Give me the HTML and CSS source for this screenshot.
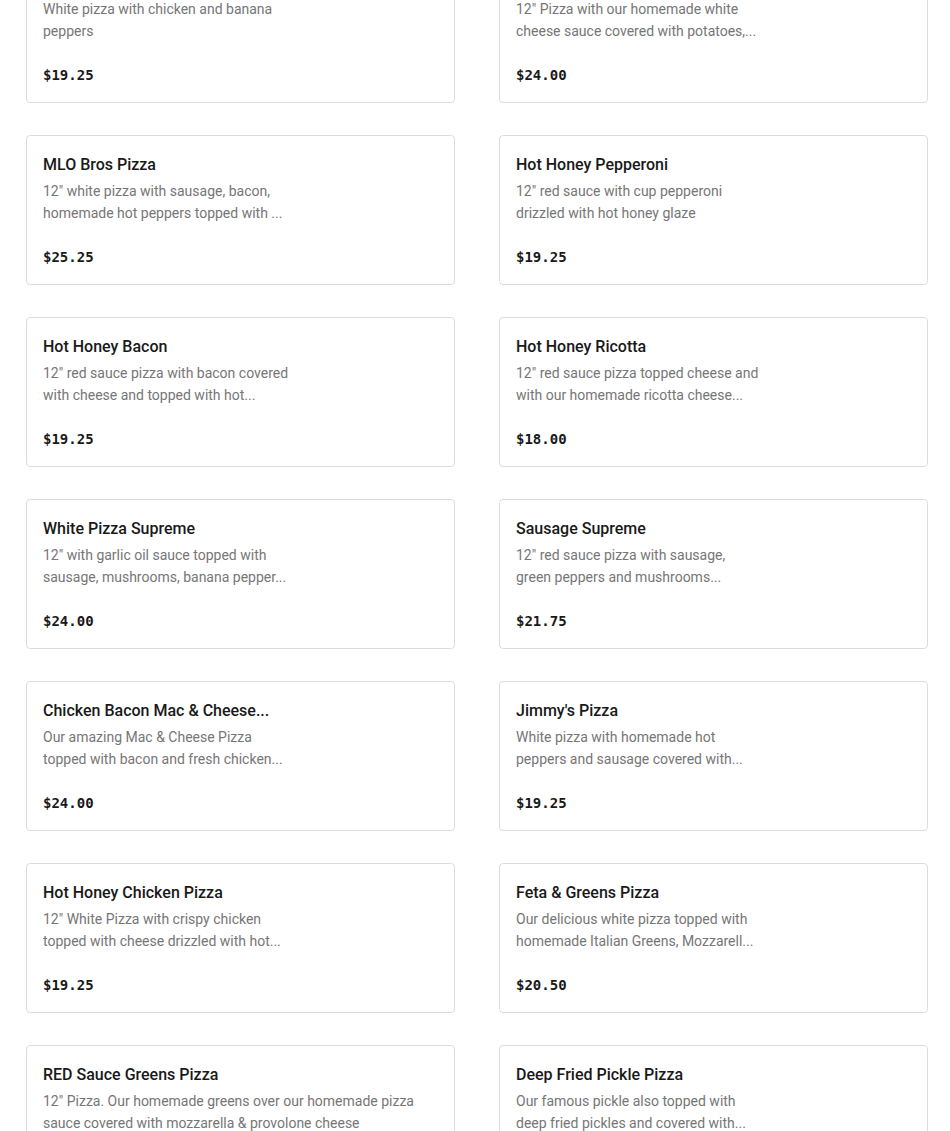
FILE: index.html
```html
<!DOCTYPE html>
<html>
<head>
<meta charset="utf-8">
<link rel="stylesheet" href="styles.css">
</head>
<body>
<div class="menu">
  <div class="card"><div class="info"><h3 class="title">Chicken Banana Pepper Pizza</h3><p class="desc">White pizza with chicken and banana peppers</p></div><div class="price">$19.25</div></div>
  <div class="card"><div class="info"><h3 class="title">Potato Pizza</h3><p class="desc">12" Pizza with our homemade white cheese sauce covered with potatoes,...</p></div><div class="price">$24.00</div></div>

  <div class="card"><div class="info"><h3 class="title">MLO Bros Pizza</h3><p class="desc">12" white pizza with sausage, bacon, homemade hot peppers topped with ...</p></div><div class="price">$25.25</div></div>
  <div class="card"><div class="info"><h3 class="title">Hot Honey Pepperoni</h3><p class="desc">12" red sauce with cup pepperoni drizzled with hot honey glaze</p></div><div class="price">$19.25</div></div>

  <div class="card"><div class="info"><h3 class="title">Hot Honey Bacon</h3><p class="desc">12" red sauce pizza with bacon covered with cheese and topped with hot...</p></div><div class="price">$19.25</div></div>
  <div class="card"><div class="info"><h3 class="title">Hot Honey Ricotta</h3><p class="desc">12" red sauce pizza topped cheese and with our homemade ricotta cheese...</p></div><div class="price">$18.00</div></div>

  <div class="card"><div class="info"><h3 class="title">White Pizza Supreme</h3><p class="desc">12" with garlic oil sauce topped with sausage, mushrooms, banana pepper...</p></div><div class="price">$24.00</div></div>
  <div class="card"><div class="info"><h3 class="title">Sausage Supreme</h3><p class="desc">12" red sauce pizza with sausage, green peppers and mushrooms...</p></div><div class="price">$21.75</div></div>

  <div class="card"><div class="info"><h3 class="title">Chicken Bacon Mac &amp; Cheese...</h3><p class="desc">Our amazing Mac &amp; Cheese Pizza topped with bacon and fresh chicken...</p></div><div class="price">$24.00</div></div>
  <div class="card"><div class="info"><h3 class="title">Jimmy's Pizza</h3><p class="desc">White pizza with homemade hot peppers and sausage covered with...</p></div><div class="price">$19.25</div></div>

  <div class="card"><div class="info"><h3 class="title">Hot Honey Chicken Pizza</h3><p class="desc">12" White Pizza with crispy chicken topped with cheese drizzled with hot...</p></div><div class="price">$19.25</div></div>
  <div class="card"><div class="info"><h3 class="title">Feta &amp; Greens Pizza</h3><p class="desc">Our delicious white pizza topped with homemade Italian Greens, Mozzarell...</p></div><div class="price">$20.50</div></div>

  <div class="card"><div class="info wide"><h3 class="title">RED Sauce Greens Pizza</h3><p class="desc">12" Pizza. Our homemade greens over our homemade pizza sauce covered with mozzarella &amp; provolone cheese</p></div><div class="price">$19.25</div></div>
  <div class="card"><div class="info"><h3 class="title">Deep Fried Pickle Pizza</h3><p class="desc">Our famous pickle also topped with deep fried pickles and covered with...</p></div><div class="price">$21.75</div></div>
</div>
</body>
</html>
```
FILE: styles.css
```css
html, body {
  margin: 0;
  padding: 0;
  background: #ffffff;
}
body {
  font-family: Roboto, "Liberation Sans", sans-serif;
  color: #191919;
}
.menu {
  display: grid;
  grid-template-columns: 429px 429px;
  column-gap: 44px;
  row-gap: 32px;
  margin-top: -47px;
  padding-left: 26px;
}
.card {
  box-sizing: border-box;
  height: 150px;
  border: 1px solid #dcdcdc;
  border-radius: 4px;
  padding: 17px 16px 16px 16px;
  display: flex;
  flex-direction: column;
}
.info {
  width: 246px;
}
.info.wide {
  width: auto;
}
.title {
  margin: 0 0 3px 0;
  font-size: 16px;
  line-height: 24px;
  font-weight: 500;
  color: #191919;
  white-space: nowrap;
  overflow: hidden;
  text-overflow: ellipsis;
}
.desc {
  margin: 0;
  font-size: 14px;
  line-height: 22px;
  color: #767676;
  display: -webkit-box;
  -webkit-line-clamp: 2;
  -webkit-box-orient: vertical;
  overflow: hidden;
}
.price {
  margin-top: auto;
  margin-bottom: 1px;
  font-family: "DejaVu Sans Mono", "Liberation Mono", monospace;
  font-size: 14px;
  line-height: 20px;
  font-weight: 700;
  color: #191919;
}
```
